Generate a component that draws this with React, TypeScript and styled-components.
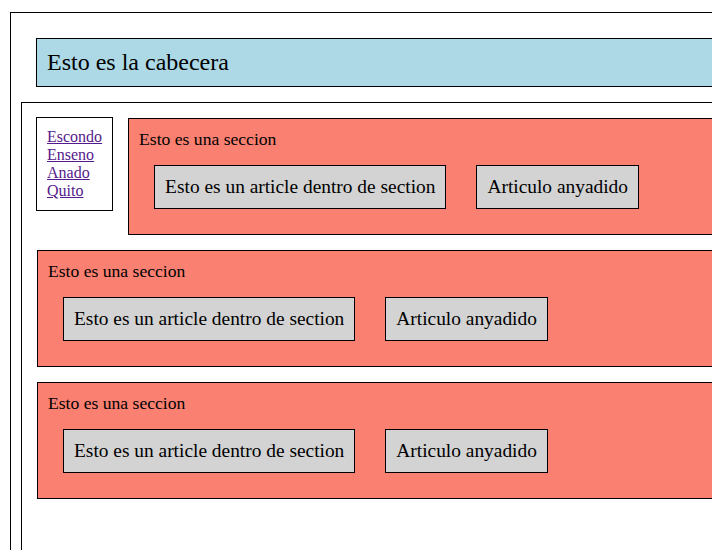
import React from "react";
import styled, { createGlobalStyle } from "styled-components";

const GlobalStyle = createGlobalStyle`
  html, body {
    margin: 0;
    padding: 0;
    overflow: hidden;
    background: #ffffff;
  }
  body {
    padding: 12px 0 0 10px;
    font-family: "Liberation Serif", "Times New Roman", serif;
    font-size: 16px;
    color: #000000;
  }
`;

const Page = styled.div`
  width: 1100px;
  min-height: 620px;
  border: 1px solid #000;
  padding-top: 25px;
`;

const Header = styled.header`
  margin: 0 25px;
  border: 1px solid #000;
  background: #add8e6;
  padding: 10px;
  font-size: 24px;
`;

const Main = styled.main`
  margin: 15px 0 0 10px;
  border: 1px solid #000;
  padding: 14px 0 40px 14px;
  min-height: 500px;
`;

const TopRow = styled.div`
  display: flex;
  align-items: flex-start;
`;

const Nav = styled.nav`
  flex: none;
  border: 1px solid #000;
  padding: 10px;
  display: flex;
  flex-direction: column;
`;

const NavLink = styled.a`
  color: #551a8b;
  text-decoration: underline;
  line-height: 18px;
`;

const Section = styled.section<{ $first?: boolean }>`
  flex: 1;
  border: 1px solid #000;
  background: #fa8072;
  padding: 10px;
  margin: ${(p) => (p.$first ? "1px 0 0 15px" : "15px 0 0 1px")};
`;

const SectionTitle = styled.div`
  font-size: 17.6px;
`;

const ArticleRow = styled.div`
  display: flex;
  align-items: flex-start;
`;

const Article = styled.article`
  margin: 15px;
  border: 1px solid #000;
  background: #d3d3d3;
  padding: 10px;
  font-size: 19.4px;
  line-height: 22px;
  white-space: nowrap;
`;

const SectionBlock: React.FC<{ first?: boolean }> = ({ first }) => (
  <Section $first={first}>
    <SectionTitle>Esto es una seccion</SectionTitle>
    <ArticleRow>
      <Article>Esto es un article dentro de section</Article>
      <Article>Articulo anyadido</Article>
    </ArticleRow>
  </Section>
);

export default function App() {
  return (
    <>
      <GlobalStyle />
      <Page>
        <Header>Esto es la cabecera</Header>
        <Main>
          <TopRow>
            <Nav>
              <NavLink href="#">Escondo</NavLink>
              <NavLink href="#">Enseno</NavLink>
              <NavLink href="#">Anado</NavLink>
              <NavLink href="#">Quito</NavLink>
            </Nav>
            <SectionBlock first />
          </TopRow>
          <SectionBlock />
          <SectionBlock />
        </Main>
      </Page>
    </>
  );
}
